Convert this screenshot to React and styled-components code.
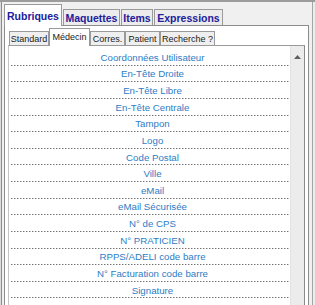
import React from "react";
import styled, { createGlobalStyle } from "styled-components";

const Global = createGlobalStyle`
  html, body { margin: 0; padding: 0; background: #ffffff; }
  * { box-sizing: border-box; }
`;

const Frame = styled.div`
  width: 315px;
  height: 305px;
  overflow: hidden;
  background: #f0f0f0;
  padding: 2px 6px 0 4px;
  display: flex;
  flex-direction: column;
  font-family: "Liberation Sans", Arial, sans-serif;
  box-shadow: inset 0 2px 0 #9c9c9c, inset 1px 0 0 #dcdcdc,
    inset 2px 0 0 #8c8c8c, inset -2px 0 0 #ececec, inset -3px 0 0 #a6a6a6;
`;

const TabStrip = styled.div`
  height: 23px;
  display: flex;
  align-items: flex-end;
  flex-shrink: 0;
`;

const Tab = styled.div`
  width: ${(p) => p.$w}px;
  height: ${(p) => (p.$active ? 22 : 16)}px;
  margin-bottom: ${(p) => (p.$active ? -1 : 0)}px;
  margin-right: 1px;
  position: relative;
  z-index: ${(p) => (p.$active ? 2 : 1)};
  background: ${(p) => (p.$active ? "#ffffff" : "#ececec")};
  border: 1px solid #9a9a9a;
  border-bottom: none;
  display: flex;
  align-items: center;
  justify-content: center;
  padding-top: ${(p) => (p.$active ? 1 : 0)}px;
  color: #20209c;
  font-weight: bold;
  font-size: 10.5px;
  white-space: nowrap;
`;

const Page = styled.div`
  width: 305px;
  flex: 1;
  background: #ffffff;
  border: 1px solid #8c8c8c;
  border-bottom: none;
  display: flex;
  flex-direction: column;
`;

const SubStrip = styled.div`
  height: 19px;
  padding-left: 4px;
  display: flex;
  align-items: flex-end;
  flex-shrink: 0;
`;

const SubTab = styled.div`
  width: ${(p) => p.$w}px;
  height: ${(p) => (p.$active ? 18 : 14)}px;
  margin-bottom: ${(p) => (p.$active ? -1 : 0)}px;
  position: relative;
  z-index: ${(p) => (p.$active ? 2 : 1)};
  background: ${(p) => (p.$active ? "#ffffff" : "#efefef")};
  border: 1px solid #9a9a9a;
  border-bottom: none;
  display: flex;
  align-items: center;
  justify-content: center;
  padding-bottom: ${(p) => (p.$active ? 2 : 0)}px;
  color: #1a1a1a;
  font-size: 9px;
  white-space: nowrap;
`;

const ListBox = styled.div`
  margin-left: 3px;
  width: 297px;
  flex: 1;
  border-top: 1px solid #9a9a9a;
  border-left: 1px solid #c4c4c4;
  border-right: 1px solid #8a8a8a;
  display: flex;
  min-height: 0;
`;

const Rows = styled.div`
  width: 281px;
  padding: 3px 1px 0 2px;
  display: flex;
  flex-direction: column;
`;

const Row = styled.div`
  height: 16.64px;
  flex-shrink: 0;
  display: flex;
  align-items: center;
  justify-content: center;
  padding-left: 5px;
  color: #2c7cc6;
  font-size: 9.7px;
  white-space: nowrap;
  background-image: repeating-linear-gradient(
    to right,
    #707070 0 1px,
    #c4c4c4 1px 2px,
    transparent 2px 3px
  );
  background-size: 100% 1px;
  background-position: left bottom;
  background-repeat: no-repeat;
`;

const ScrollBar = styled.div`
  width: 14px;
  background: #ececec;
  border-left: 1px solid #e2e2e2;
  display: flex;
  flex-direction: column;
`;

const ScrollButton = styled.div`
  height: 20px;
  display: flex;
  align-items: center;
  justify-content: center;
  padding-top: 1px;
`;

const topTabs = [
  { label: "Rubriques", w: 58, active: true },
  { label: "Maquettes", w: 57 },
  { label: "Items", w: 32 },
  { label: "Expressions", w: 69 },
];

const subTabs = [
  { label: "Standard", w: 40 },
  { label: "Médecin", w: 41, active: true },
  { label: "Corres.", w: 35 },
  { label: "Patient", w: 35 },
  { label: "Recherche ?", w: 55 },
];

const items = [
  "Coordonnées Utilisateur",
  "En-Tête Droite",
  "En-Tête Libre",
  "En-Tête Centrale",
  "Tampon",
  "Logo",
  "Code Postal",
  "Ville",
  "eMail",
  "eMail Sécurisée",
  "N° de CPS",
  "N° PRATICIEN",
  "RPPS/ADELI code barre",
  "N° Facturation code barre",
  "Signature",
];

export default function App() {
  return (
    <>
      <Global />
      <Frame>
        <TabStrip>
          {topTabs.map((t) => (
            <Tab key={t.label} $w={t.w} $active={t.active}>
              {t.label}
            </Tab>
          ))}
        </TabStrip>
        <Page>
          <SubStrip>
            {subTabs.map((t) => (
              <SubTab key={t.label} $w={t.w} $active={t.active}>
                {t.label}
              </SubTab>
            ))}
          </SubStrip>
          <ListBox>
            <Rows>
              {items.map((it) => (
                <Row key={it}>{it}</Row>
              ))}
            </Rows>
            <ScrollBar>
              <ScrollButton>
                <svg width="7" height="4" viewBox="0 0 7 4">
                  <path d="M0 4 L3.5 0 L7 4 Z" fill="#606060" />
                </svg>
              </ScrollButton>
            </ScrollBar>
          </ListBox>
        </Page>
      </Frame>
    </>
  );
}
